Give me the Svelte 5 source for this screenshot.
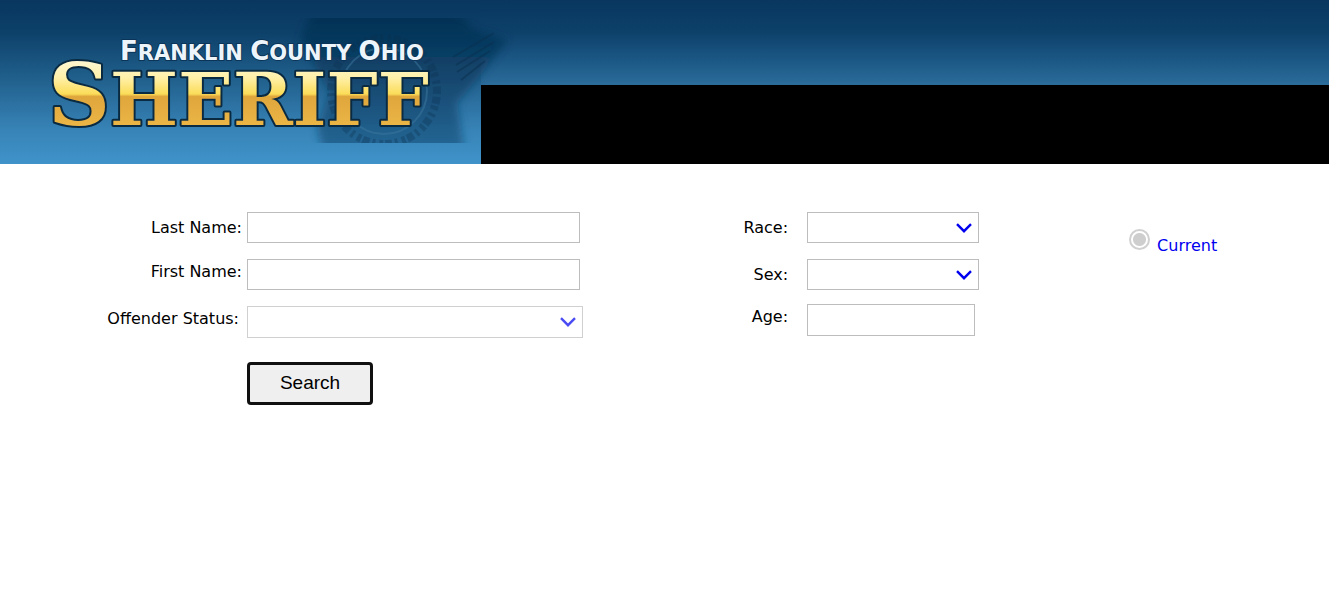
<script>
  let lastName = $state("");
  let firstName = $state("");
  let race = $state("");
  let sex = $state("");
  let age = $state("");

  function search(e) {
    e.preventDefault();
  }
</script>

{#snippet chevron()}
  <svg class="chevron" viewBox="0 0 16 10" aria-hidden="true">
    <path d="M1 1.2 8 8.2 15 1.2" />
  </svg>
{/snippet}

<header class="banner">
  <svg class="logo" viewBox="0 0 481 164" role="img" aria-label="Franklin County Ohio Sheriff">
    <defs>
      <linearGradient id="sky" x1="0" y1="0" x2="0" y2="1">
        <stop offset="0" stop-color="#08365f" />
        <stop offset="0.2" stop-color="#0d416a" />
        <stop offset="0.5" stop-color="#22628f" />
        <stop offset="0.8" stop-color="#3884b8" />
        <stop offset="1" stop-color="#3f93c9" />
      </linearGradient>
      <linearGradient id="gold" gradientUnits="userSpaceOnUse" x1="0" y1="62" x2="0" y2="126">
        <stop offset="0" stop-color="#fff6cf" />
        <stop offset="0.25" stop-color="#fff0a8" />
        <stop offset="0.5" stop-color="#fbdc58" />
        <stop offset="0.54" stop-color="#dfa63c" />
        <stop offset="1" stop-color="#ecb646" />
      </linearGradient>
      <linearGradient id="badge" x1="0" y1="0" x2="0" y2="1">
        <stop offset="0" stop-color="#062d4d" stop-opacity="0.75" />
        <stop offset="0.5" stop-color="#0b3d63" stop-opacity="0.7" />
        <stop offset="1" stop-color="#174f79" stop-opacity="0.6" />
      </linearGradient>
      <filter id="soft" x="-10%" y="-10%" width="120%" height="120%">
        <feGaussianBlur stdDeviation="4" />
      </filter>
      <clipPath id="badge-area"><path d="M290 18H520V85H481V143H290Z" /></clipPath>
    </defs>
    <rect width="481" height="164" fill="url(#sky)" />
    <g clip-path="url(#badge-area)">
      <path
        d="M312 10H456L474 29 508 40 478 78 457 103 465 153H323L317 128 330 92 300 40Z"
        fill="url(#badge)"
        filter="url(#soft)" />
      <g fill="none" stroke="#0b304f" opacity="0.5">
        <circle cx="384" cy="91" r="43" stroke="#3d789d" stroke-width="2" />
        <circle cx="384" cy="91" r="53" stroke-width="8" stroke-dasharray="3 3 7 2 4 4" opacity="0.6" />
        <path d="M453 57 494 33M456 65 494 42M457 72 490 51M461 80 485 61" stroke-width="2" />
      </g>
    </g>
    <text class="county" x="120" y="60"
      >F<tspan class="small">RANKLIN&nbsp;</tspan>C<tspan class="small">OUNTY&nbsp;</tspan>O<tspan class="small">HIO</tspan></text>
    <text class="sheriff" x="48" y="125">S<tspan class="caps">HERIFF</tspan></text>
  </svg>
  <div class="strip"><div class="bar"></div></div>
</header>

<form class="search" onsubmit={search}>
  <div class="column names">
    <div class="row">
      <label for="last">Last Name:</label>
      <input id="last" type="text" bind:value={lastName} />
    </div>
    <div class="row raised">
      <label for="first">First Name:</label>
      <input id="first" type="text" bind:value={firstName} />
    </div>
    <div class="row raised status">
      <label for="status">Offender Status:</label>
      <span class="select disabled">
        <select id="status" disabled><option></option></select>
        {@render chevron()}
      </span>
    </div>
    <div class="actions"><button type="submit">Search</button></div>
  </div>

  <div class="column details">
    <div class="row">
      <label for="race">Race:</label>
      <span class="select">
        <select id="race" bind:value={race}><option value=""></option></select>
        {@render chevron()}
      </span>
    </div>
    <div class="row">
      <label for="sex">Sex:</label>
      <span class="select">
        <select id="sex" bind:value={sex}><option value=""></option></select>
        {@render chevron()}
      </span>
    </div>
    <div class="row raised age">
      <label for="age">Age:</label>
      <input id="age" type="text" bind:value={age} />
    </div>
  </div>

  <div class="period">
    <input id="current" type="radio" name="period" checked disabled />
    <label for="current">Current</label>
  </div>
</form>

<style>
  :global(body) {
    margin: 0;
    background: #fff;
    color: #000;
    font: 16px/26px Verdana, "DejaVu Sans", sans-serif;
  }

  .banner {
    display: flex;
  }
  .logo {
    display: block;
    position: relative;
    flex: none;
    width: 481px;
    overflow: visible;
  }
  .strip {
    display: flex;
    flex: 1;
    padding-top: 85px;
    background: linear-gradient(#08365f, #0d416a 32px, #195481 56px, #2b6c9b 85px);
  }
  .bar {
    flex: 1;
    background: #000;
  }

  .county {
    font: bold 26px "DejaVu Sans", sans-serif;
    fill: #edf5fb;
    stroke: #0b3558;
    stroke-width: 2px;
    paint-order: stroke;
  }
  .small {
    font-size: 21px;
  }
  .sheriff {
    font: bold 86px "DejaVu Serif", serif;
    fill: url(#gold);
    stroke: #0a2a42;
    stroke-width: 4px;
    stroke-linejoin: round;
    paint-order: stroke;
  }
  .caps {
    font-size: 72px;
  }

  .search {
    display: grid;
    grid-template-columns: 45% 38% 1fr;
    padding-top: 48px;
  }
  .column {
    display: flex;
    flex-direction: column;
    gap: 16px;
  }
  .row {
    display: grid;
    align-items: center;
  }
  .raised {
    align-items: start;
  }
  .names .row {
    grid-template-columns: 247px 1fr;
  }
  .details .row {
    grid-template-columns: 209px 1fr;
  }
  .row label {
    text-align: right;
    padding-right: 5px;
  }
  .status label {
    padding-right: 8px;
  }
  .details label {
    padding-right: 19px;
  }

  input[type="text"],
  select {
    box-sizing: border-box;
    height: 31px;
    padding: 2px 6px;
    border: 1px solid #bdbdbd;
    border-radius: 0;
    background: #fff;
    font: inherit;
  }
  .names input {
    width: 333px;
  }
  .details input {
    width: 168px;
    height: 32px;
  }
  .age {
    margin-top: -2px;
  }

  .select {
    display: flex;
    position: relative;
    width: 172px;
  }
  .status .select {
    width: 336px;
  }
  select {
    appearance: none;
    width: 100%;
    color: #00e;
  }
  .status select {
    height: 32px;
  }
  .disabled {
    opacity: 0.7;
  }
  select:disabled {
    opacity: 1;
  }
  .chevron {
    position: absolute;
    top: 11px;
    right: 7px;
    width: 16px;
    height: 10px;
    fill: none;
    stroke: #00e;
    stroke-width: 2.4;
    pointer-events: none;
  }

  .actions {
    padding: 8px 0 0 247px;
  }
  button {
    display: block;
    box-sizing: border-box;
    width: 126px;
    height: 43px;
    padding: 0 0 2px;
    border: 3px solid #101010;
    border-radius: 4px;
    background: #efefef;
    color: #000;
    font: 19px "Liberation Sans", Arial, sans-serif;
  }

  .period {
    display: flex;
    align-items: flex-start;
    gap: 7px;
    padding: 17px 0 0 26px;
  }
  .period input {
    appearance: none;
    box-sizing: border-box;
    flex: none;
    width: 21px;
    height: 21px;
    margin: 0;
    border: 2px solid #d0d0d0;
    border-radius: 50%;
    background: radial-gradient(circle, #cecece 6px, #fff 7px);
  }
  .period label {
    padding-top: 4px;
    color: #00e;
  }
</style>
